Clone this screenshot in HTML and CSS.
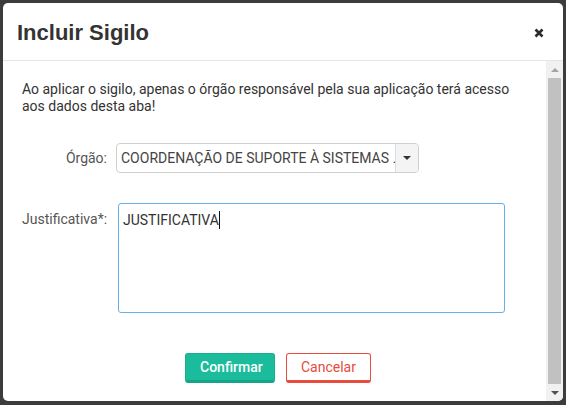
FILE: index.html
```html
<!DOCTYPE html>
<html lang="pt-BR">
<head>
<meta charset="utf-8">
<title>Incluir Sigilo</title>
<link rel="stylesheet" href="styles.css">
</head>
<body>
<div class="dialog">
  <div class="dialog-header">
    <h1 class="dialog-title">Incluir Sigilo</h1>
    <button class="close" aria-label="Fechar">
      <svg width="10" height="10" viewBox="0 0 10 10"><path d="M1.5 1.5L8.5 8.5M8.5 1.5L1.5 8.5" stroke="#2b2b2b" stroke-width="2.6" stroke-linecap="butt"/></svg>
    </button>
  </div>
  <div class="dialog-body">
    <div class="content">
      <p class="notice">Ao aplicar o sigilo, apenas o órgão responsável pela sua aplicação terá acesso aos dados desta aba!</p>
      <div class="row row-orgao">
        <label class="label">Órgão:</label>
        <div class="select">
          <span class="select-text">COORDENAÇÃO DE SUPORTE À SISTEMAS ...</span>
          <span class="select-btn"><span class="caret"></span></span>
        </div>
      </div>
      <div class="row row-just">
        <label class="label label-top">Justificativa*:</label>
        <div class="textarea"><span class="typed">JUSTIFICATIVA</span><span class="cursor"></span></div>
      </div>
      <div class="actions">
        <button class="btn btn-confirm">Confirmar</button>
        <button class="btn btn-cancel">Cancelar</button>
      </div>
    </div>
    <div class="scrollbar">
      <div class="arrow arrow-up"></div>
      <div class="thumb"></div>
      <div class="arrow arrow-down"></div>
    </div>
  </div>
</div>
</body>
</html>
```

FILE: styles.css
```css
html, body {
  margin: 0;
  padding: 0;
}
body {
  background: #3c3c3c;
  padding: 3px;
  width: 566px;
  height: 405px;
  box-sizing: border-box;
  font-family: Roboto, "Liberation Sans", Arial, sans-serif;
  font-size: 14px;
  color: #333;
}
.dialog {
  width: 560px;
  height: 398px;
  background: #fff;
  border-radius: 5px;
  overflow: hidden;
  display: flex;
  flex-direction: column;
}
.dialog-header {
  height: 57px;
  border-bottom: 1px solid #e5e5e5;
  display: flex;
  align-items: center;
  justify-content: space-between;
  padding: 0 19px 0 14px;
  flex: none;
}
.dialog-title {
  margin: 0;
  font-family: "Liberation Sans", Arial, sans-serif;
  font-weight: bold;
  font-size: 22px;
  line-height: 26px;
  color: #333;
  padding-top: 2px;
}
.close {
  border: 0;
  background: transparent;
  padding: 0;
  width: 10px;
  height: 10px;
  display: block;
  margin-top: 2px;
}
.close svg { display: block; }
.dialog-body {
  flex: 1;
  display: flex;
  min-height: 0;
}
.content {
  flex: 1;
  padding: 20px 0 0 19px;
}
.notice {
  margin: 0;
  line-height: 17px;
  width: 500px;
}
.row {
  display: flex;
}
.row-orgao {
  margin-top: 28px;
  align-items: center;
}
.row-just {
  margin-top: 30px;
  align-items: flex-start;
}
.label {
  width: 85px;
  text-align: right;
  color: #555;
  flex: none;
}
.label-top {
  padding-top: 6px;
  line-height: 20px;
}
.select {
  margin-left: 9px;
  width: 303px;
  height: 30px;
  box-sizing: border-box;
  border: 1px solid #d0d0d0;
  border-radius: 4px;
  display: flex;
  overflow: hidden;
}
.select-text {
  flex: 1;
  padding: 0 0 0 4px;
  line-height: 28px;
  white-space: nowrap;
  overflow: hidden;
  color: #444;
  min-width: 0;
}
.select-btn {
  width: 22px;
  flex: none;
  border-left: 1px solid #ddd;
  background: #f4f4f4;
  display: flex;
  align-items: center;
  justify-content: center;
}
.caret {
  width: 0;
  height: 0;
  border-left: 4px solid transparent;
  border-right: 4px solid transparent;
  border-top: 4px solid #333;
}
.textarea {
  margin-left: 11px;
  width: 387px;
  height: 110px;
  box-sizing: border-box;
  border: 1px solid #66afe9;
  border-radius: 3px;
  padding: 6px 4px;
  line-height: 20px;
  color: #333;
}
.cursor {
  display: inline-block;
  width: 1px;
  height: 18px;
  background: #111;
  vertical-align: -4px;
}
.actions {
  margin-top: 40px;
  display: flex;
  justify-content: center;
  gap: 11px;
  padding-right: 12px;
}
.btn {
  font-family: Roboto, "Liberation Sans", Arial, sans-serif;
  font-size: 14px;
  height: 30px;
  box-sizing: border-box;
  border-radius: 3px;
  padding: 0 14px;
  line-height: 26px;
  cursor: pointer;
}
.btn-confirm {
  width: 90px;
  background: #1abc9c;
  color: #fff;
  border: 1px solid #1aae91;
  border-bottom: 3px solid #17a589;
  font-weight: 500;
}
.btn-cancel {
  width: 85px;
  background: #fff;
  color: #e74c3c;
  border: 1px solid #e74c3c;
  border-bottom: 3px solid #e74c3c;
}
.scrollbar {
  width: 17px;
  flex: none;
  background: #f1f1f1;
  display: flex;
  flex-direction: column;
  align-items: center;
}
.arrow {
  height: 17px;
  width: 100%;
  display: flex;
  align-items: center;
  justify-content: center;
  flex: none;
}
.arrow::before {
  content: "";
  width: 0;
  height: 0;
  border-left: 4px solid transparent;
  border-right: 4px solid transparent;
}
.arrow-up::before {
  border-bottom: 4px solid #a3a3a3;
}
.arrow-down::before {
  border-top: 4px solid #505050;
}
.thumb {
  flex: 1;
  width: 13px;
  background: #c1c1c1;
}
```
